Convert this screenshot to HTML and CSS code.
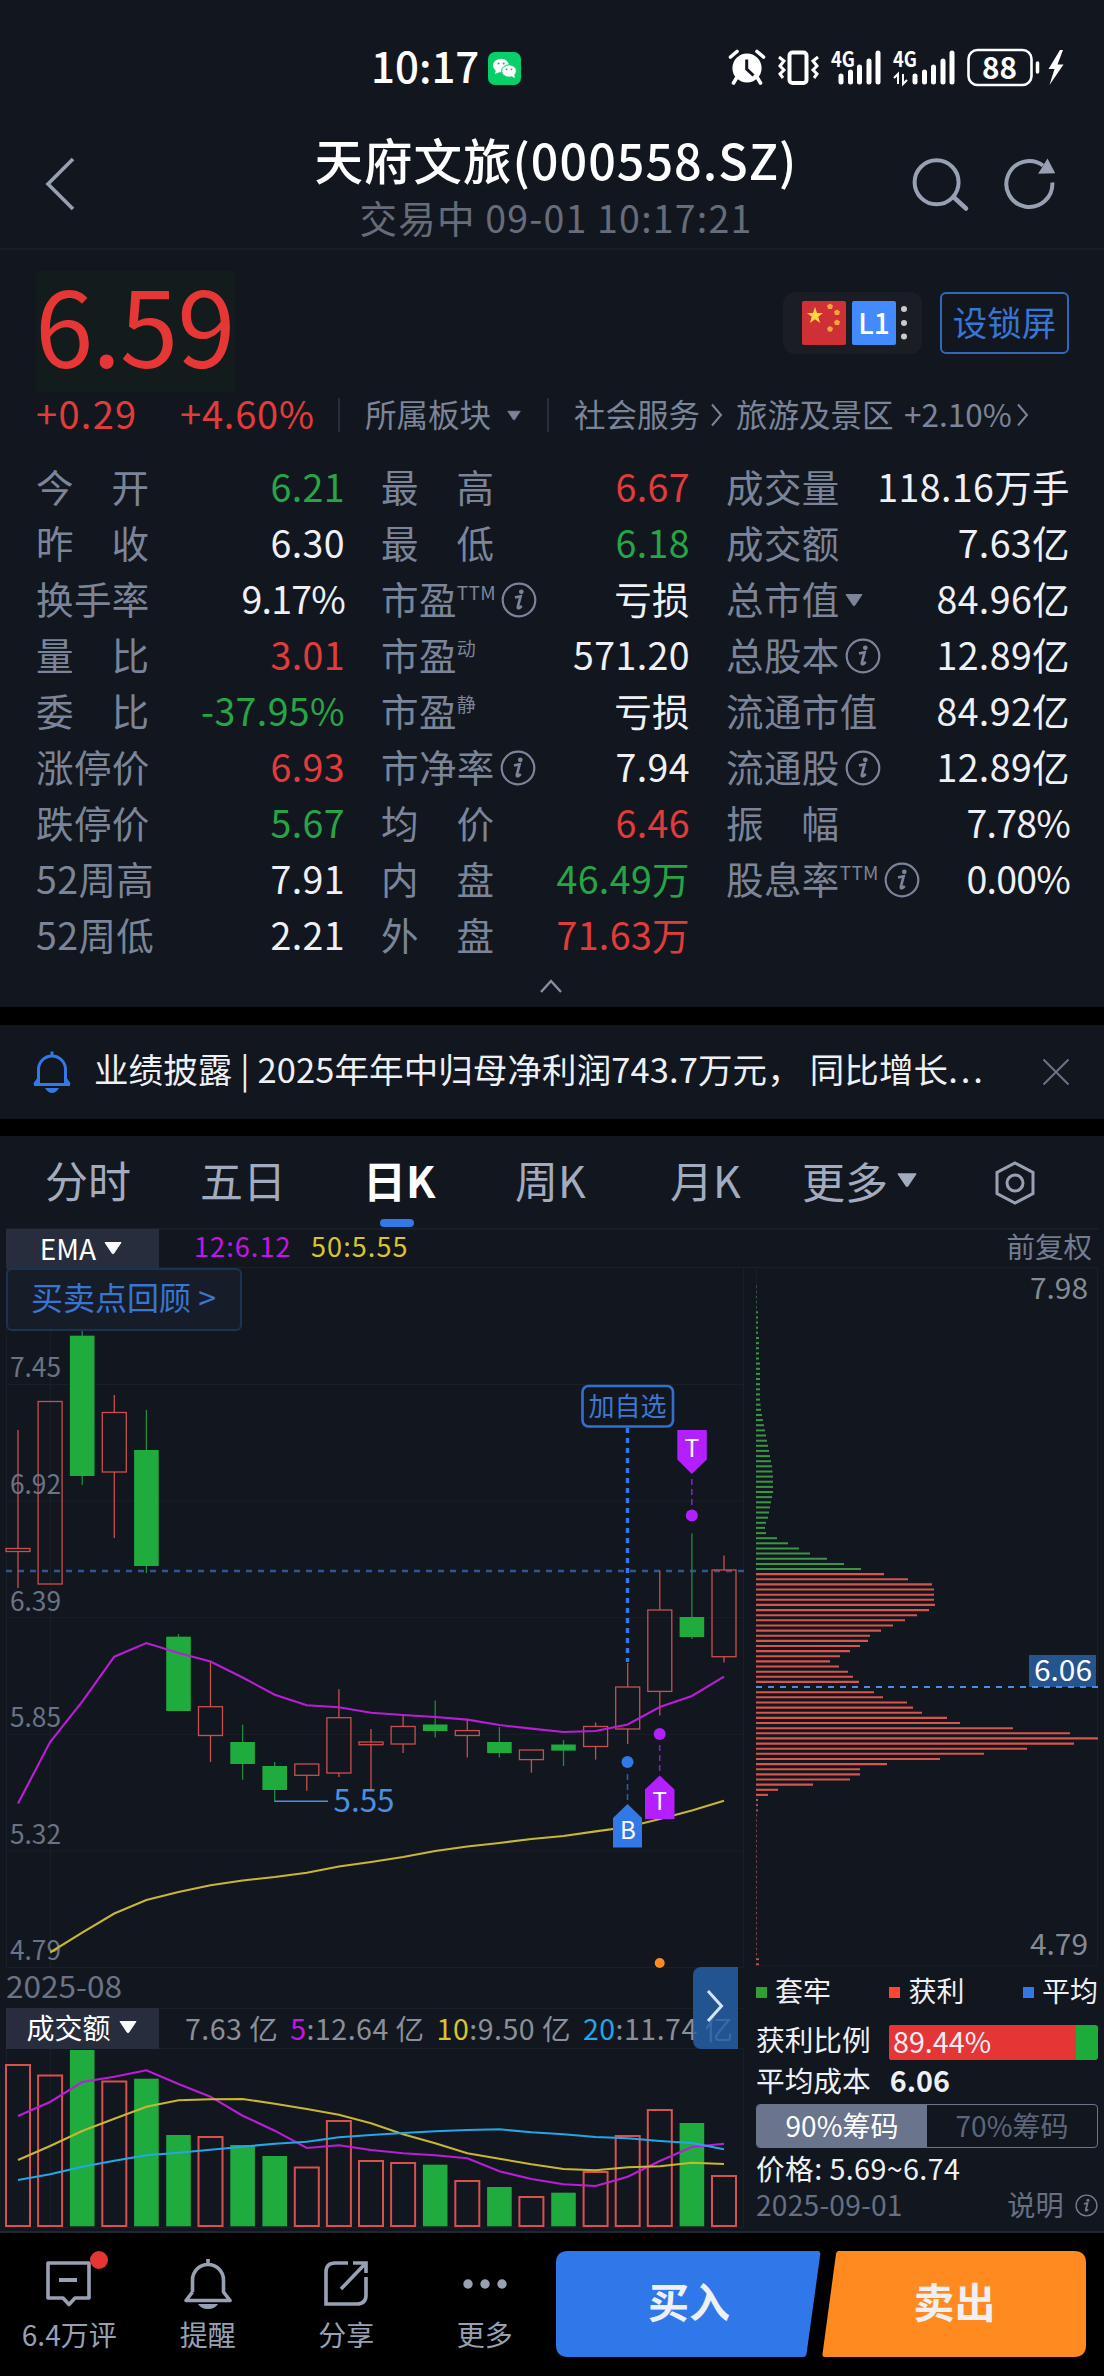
FILE: index.html
```html
<!DOCTYPE html>
<html lang="zh-CN">
<head>
<meta charset="utf-8">
<title>天府文旅(000558.SZ)</title>
<link rel="stylesheet" href="styles.css">
</head>
<body>
<svg width="0" height="0" class="defs">
  <symbol id="info" viewBox="0 0 36 36"><circle cx="18" cy="18" r="16.3" fill="none" stroke="currentColor" stroke-width="2.2"/><circle cx="20.3" cy="9.8" r="2.4" fill="currentColor"/><path d="M14 15.5 Q17.5 14.6 19.6 14.4 L16.8 25 Q16.6 27 18.6 25.8 L20.8 24" fill="none" stroke="currentColor" stroke-width="2.7"/></symbol>
  <symbol id="caret" viewBox="0 0 18 14"><path d="M1 1.5 H17 L9.6 12.6 H8.4 Z" fill="currentColor" stroke="currentColor" stroke-linejoin="round"/></symbol>
  <symbol id="chev" viewBox="0 0 13 24"><path d="M2 1.5 L11 12 L2 22.5" fill="none" stroke="currentColor" stroke-width="2"/></symbol>
</svg>

<header class="status">
  <span class="clock">10:17</span>
  <svg class="wechat" width="33" height="33" viewBox="0 0 33 33"><rect width="33" height="33" rx="7" fill="#07cf69"/><ellipse cx="13" cy="13.5" rx="8" ry="6.8" fill="#fff"/><path d="M8 18l-1 4 5-2z" fill="#fff"/><ellipse cx="21" cy="19" rx="7.4" ry="6.2" fill="#fff" stroke="#07cf69"/><path d="M23 24l4 2-1-4z" fill="#fff"/><g fill="#07b65c"><circle cx="10.5" cy="11.5" r="1"/><circle cx="15.7" cy="11.5" r="1"/><circle cx="18.6" cy="17.3" r=".9"/><circle cx="23.4" cy="17.3" r=".9"/></g></svg>
  <svg class="sysicons" width="340" height="40" viewBox="726 48 340 40" fill="#fff" stroke="#fff">
    <circle cx="746" cy="68" r="14.6" stroke="none"/>
    <path d="M729.5 57 L736 51.5 M762.5 57 L756 51.5 M735.5 78 L732.5 83 M756.500 78 L759.500 83" stroke-width="3.6" stroke-linecap="round"/>
    <path d="M745.700 59.500 V69 L752.500 75.500" fill="none" stroke="#12171f" stroke-width="3"/>
    <rect x="788.500" y="52.500" width="17" height="30.500" rx="3" fill="none" stroke-width="4"/>
    <path d="M778 57 L783 61 L779 66 L783 70 L779 74 L782 78 M817 57 L812 61 L816 66 L812 70 L816 74 L813 78" fill="none" stroke-width="3"/>
    <path d="M840 76 V82 M849.500 72 V82 M858.500 67 V82 M868 61 V82 M877 53 V82 M914 76 V82 M923.500 72 V82 M932.500 67 V82 M942 61 V82 M951 53 V82" stroke-width="5" stroke-linecap="round"/>
    <path d="M893 78 L897 74 V84 M902 74 V84 L906 80" fill="none" stroke-width="2"/>
    <rect x="967.500" y="50" width="63" height="35" rx="9" fill="none" stroke-width="2.600"/>
    <path d="M1036.500 63 V72" stroke-width="3.500" stroke-linecap="round"/>
    <path d="M1059 50 L1047.500 69 H1053.500 L1048.500 85 L1062.500 64.500 H1056.500 L1062 50 Z" stroke="none"/>
    <g stroke="none" class="sys-text"><text x="830" y="67" font-size="21" textLength="24" lengthAdjust="spacingAndGlyphs">4G</text><text x="892" y="67" font-size="21" textLength="24" lengthAdjust="spacingAndGlyphs">4G</text><text x="981" y="78.500" font-size="30" textLength="35" lengthAdjust="spacingAndGlyphs">88</text></g>
  </svg>
</header>

<nav class="titlebar">
  <svg width="34" height="56" viewBox="0 0 34 56"><path d="M30 3 L5 28 L30 53" fill="none" stroke="#98a1b3" stroke-width="3.600"/></svg>
  <div class="titles"><h1>天府文旅(000558.SZ)</h1><p>交易中 09-01 10:17:21</p></div>
  <svg width="146" height="58" viewBox="908 156 146 58" fill="none" stroke="#98a1b3" stroke-width="4">
    <circle cx="935.600" cy="183.300" r="22"/><path d="M952.500 198 L965 209.500" stroke-width="4.500" stroke-linecap="round"/>
    <path d="M1051.300 183.500 A23 23 0 1 1 1042 166.500"/><path d="M1046.500 161 L1053 173.500 L1038.500 174 Z" fill="#98a1b3" stroke-width="1.500"/>
  </svg>
</nav>

<section class="quote">
  <div class="price-row">
    <div class="price">6.59</div>
    <div class="badges">
      <svg width="44" height="44" viewBox="0 0 44 44"><rect width="44" height="44" rx="2" fill="#cf3036"/><path d="M13 6 L15 12 21 12 16.300 15.800 18 22 13 18.300 8 22 9.700 15.800 5 12 11 12Z" fill="#ffd83d"/><g fill="#f0a53c"><path d="M28 2.500l3 2-1 3.500h-4l-1-3.500zM35 8.500l3 2-1 3.500h-4l-1-3.500zM35 18.500l3 2-1 3.500h-4l-1-3.500zM28 25l3 2-1 3.500h-4l-1-3.500z"/></g></svg>
      <b>L1</b>
      <svg width="6" height="36" viewBox="0 0 6 36" fill="#c9cbd0"><circle cx="3" cy="4" r="3"/><circle cx="3" cy="18" r="3"/><circle cx="3" cy="31.500" r="3"/></svg>
    </div>
    <button class="lock">设锁屏</button>
  </div>
  <div class="change-row">
    <span class="red chg">+0.29</span><span class="red pct">+4.60%</span><i></i>
    <span class="sector">所属板块</span><svg class="sm-caret" width="14" height="11" viewBox="0 0 18 14"><use href="#caret" width="18" height="14"/></svg><i></i>
    <span class="s1">社会服务</span><svg width="13" height="24"><use href="#chev"/></svg><span class="s2">旅游及景区</span><span class="s3">+2.10%</span><svg width="13" height="24"><use href="#chev"/></svg>
  </div>
  <div class="stats">
    <dl>
      <div><dt class="two">今<span>开</span></dt><dd class="green">6.21</dd></div>
      <div><dt class="two">昨<span>收</span></dt><dd>6.30</dd></div>
      <div><dt>换手率</dt><dd class="tight">9.17%</dd></div>
      <div><dt class="two">量<span>比</span></dt><dd class="red">3.01</dd></div>
      <div><dt class="two">委<span>比</span></dt><dd class="green">-37.95%</dd></div>
      <div><dt>涨停价</dt><dd class="red">6.93</dd></div>
      <div><dt>跌停价</dt><dd class="green">5.67</dd></div>
      <div><dt>52周高</dt><dd>7.91</dd></div>
      <div><dt>52周低</dt><dd>2.21</dd></div>
    </dl>
    <dl>
      <div><dt class="two">最<span>高</span></dt><dd class="red">6.67</dd></div>
      <div><dt class="two">最<span>低</span></dt><dd class="green">6.18</dd></div>
      <div><dt>市盈<sup>TTM</sup><svg width="36" height="36"><use href="#info"/></svg></dt><dd>亏损</dd></div>
      <div><dt>市盈<sup>动</sup></dt><dd>571.20</dd></div>
      <div><dt>市盈<sup>静</sup></dt><dd>亏损</dd></div>
      <div><dt>市净率<svg width="36" height="36"><use href="#info"/></svg></dt><dd>7.94</dd></div>
      <div><dt class="two">均<span>价</span></dt><dd class="red">6.46</dd></div>
      <div><dt class="two">内<span>盘</span></dt><dd class="green">46.49万</dd></div>
      <div><dt class="two">外<span>盘</span></dt><dd class="red">71.63万</dd></div>
    </dl>
    <dl>
      <div><dt>成交量</dt><dd>118.16万手</dd></div>
      <div><dt>成交额</dt><dd>7.63亿</dd></div>
      <div><dt>总市值<svg class="cap-caret" width="18" height="14"><use href="#caret"/></svg></dt><dd>84.96亿</dd></div>
      <div><dt>总股本<svg width="36" height="36"><use href="#info"/></svg></dt><dd>12.89亿</dd></div>
      <div><dt>流通市值</dt><dd>84.92亿</dd></div>
      <div><dt>流通股<svg width="36" height="36"><use href="#info"/></svg></dt><dd>12.89亿</dd></div>
      <div><dt class="two">振<span>幅</span></dt><dd class="tight">7.78%</dd></div>
      <div><dt>股息率<sup>TTM</sup><svg width="36" height="36"><use href="#info"/></svg></dt><dd class="tight">0.00%</dd></div>
    </dl>
  </div>
  <svg class="collapse" width="24" height="16" viewBox="0 0 24 16"><path d="M2 14 L12 3 L22 14" fill="none" stroke="#8790a3" stroke-width="2.400"/></svg>
</section>

<section class="news">
  <svg width="40" height="44" viewBox="0 0 40 44"><path d="M20 1.500V6M6.500 33V19.500a13.500 13.500 0 0 1 27 0V33M2 34.500H38M6.500 29L2.500 34.500M33.500 29L37.500 34.500" fill="none" stroke="#3278e6" stroke-width="3"/><path d="M13 38H27Q24 43 20 43T13 38Z" fill="#3278e6"/></svg>
  <p>业绩披露 | 2025年年中归母净利润743.7万元<span class="comma">，</span>同比增长<span class="dots">...</span></p>
  <svg width="28" height="28" viewBox="0 0 28 28"><path d="M1.500 1.500L26.500 26.500M26.500 1.500L1.500 26.500" stroke="#6a7388" stroke-width="2"/></svg>
</section>

<section class="chart">
  <nav class="tabs">
    <span>分时</span><span>五日</span><span class="on">日K</span><span>周K</span><span>月K</span><span>更多<svg width="20" height="16" viewBox="0 0 18 14"><use href="#caret" width="18" height="14"/></svg></span>
    <svg class="gear" width="42" height="44" viewBox="0 0 42 44" fill="none" stroke="#98a1b3" stroke-width="3"><path d="M21 2L39 11.500V32.500L21 42L3 32.500V11.500Z"/><circle cx="21" cy="22" r="8"/></svg>
  </nav>
  <div class="indicator">
    <div class="tag">EMA<svg width="18" height="14"><use href="#caret"/></svg></div>
    <span class="ema12">12:6.12</span><span class="ema50">50:5.55</span><span class="adj">前复权</span>
  </div>
  <div class="panes">
    <div class="left">
      <button class="review">买卖点回顾 &gt;</button>
      <svg id="kline" width="744" height="740" viewBox="0 1268 744 740"></svg>
      <div class="vol-head">
        <div class="tag">成交额<svg width="18" height="14"><use href="#caret"/></svg></div>
        <span>7.63 亿</span><span><b class="m">5</b>:12.64 亿</span><span><b class="y">10</b>:9.50 亿</span><span><b class="c">20</b>:11.74 亿</span>
      </div>
      <svg id="volume" width="744" height="183" viewBox="0 2049 744 183"></svg>
      <div class="drawer"><svg width="18" height="34" viewBox="0 0 18 34"><path d="M2 2L15.500 17L2 32" fill="none" stroke="#d5e4f7" stroke-width="3"/></svg></div>
    </div>
    <div class="right">
      <svg id="chips" width="360" height="700" viewBox="744 1268 360 700"></svg>
      <div class="legend"><span class="lg">套牢</span><span class="lr">获利</span><span class="lb">平均</span></div>
      <div class="ratio"><span>获利比例</span><div class="bar"><div style="width:89.44%">89.44%</div></div></div>
      <div class="cost"><span>平均成本</span><b>6.06</b></div>
      <div class="seg"><span class="on">90%筹码</span><span>70%筹码</span></div>
      <div class="range">价格: 5.69~6.74</div>
      <div class="date"><span>2025-09-01</span><span>说明<svg width="23" height="23" viewBox="0 0 36 36"><use href="#info" width="36" height="36"/></svg></span></div>
    </div>
  </div>
</section>

<footer>
  <div class="act"><span class="icon"><svg width="48" height="50" viewBox="0 0 48 50" fill="none" stroke="#98a1b3" stroke-width="3.600" stroke-linejoin="round"><path d="M3 5H44V40H30L24 46.500L18 40H3Z"/><path d="M14 22H32" stroke-width="4"/></svg><i class="dot"></i></span>6.4万评</div>
  <div class="act"><span class="icon"><svg width="50" height="52" viewBox="0 0 50 52" fill="none" stroke="#98a1b3" stroke-width="3.600"><path d="M25 1V7M9.500 34V22a15.500 15.500 0 0 1 31 0V34L47 42.500H3L9.500 34" stroke-linejoin="round"/><path d="M15 46H35Q32 51 25 51T15 46Z" fill="#98a1b3" stroke="none"/></svg></span>提醒</div>
  <div class="act"><span class="icon"><svg width="46" height="50" viewBox="0 0 46 50" fill="none" stroke="#98a1b3" stroke-width="3.600"><path d="M25 5H12Q3 5 3 14V46H34Q43 46 43 37V19M18 31L41 7M30 5H43V15"/></svg></span>分享</div>
  <div class="act"><span class="icon"><svg width="46" height="50" viewBox="0 0 46 50" fill="#98a1b3"><circle cx="6" cy="26" r="4.700"/><circle cx="23" cy="26" r="4.700"/><circle cx="40" cy="26" r="4.700"/></svg></span>更多</div>
  <div class="trade buy"><svg width="266" height="106" viewBox="0 0 266 106"><path d="M12 0H262Q264.500 0 264.300 3L250.500 103Q250 106 247 106H12Q0 106 0 94V12Q0 0 12 0Z" fill="#3078ea"/></svg><span>买入</span></div>
  <div class="trade sell"><svg width="265" height="106" viewBox="0 0 265 106"><path d="M17 0H252Q264 0 264 12V94Q264 106 252 106H3Q0 106 .5 103L14 3Q14.500 0 17 0Z" fill="#ff8b20"/></svg><span>卖出</span></div>
</footer>
<script src="chart.js"></script>
</body>
</html>
```
FILE: styles.css
```css
* { box-sizing: border-box; margin: 0; padding: 0; }
body { width: 1104px; height: 2376px; background: #000; color: #eef0f5; font-family: "Noto Sans CJK SC", "Noto Sans", sans-serif; overflow: hidden; }
svg { display: block; flex: none; }
.defs { position: absolute; }
button { font: inherit; background: none; border: 0; white-space: nowrap; }
.red { color: #e13c3c; }
.green { color: #27a546; }

.status { height: 115px; background: #12171f; display: flex; align-items: center; padding-top: 21px; }
.clock { margin-left: 371px; width: 117px; font-size: 42px; line-height: 50px; font-weight: 500; color: #fff; margin-top: -7px; }
.sysicons { margin-left: 206px; overflow: visible; }
.sys-text { font-family: "Noto Sans CJK SC", sans-serif; font-weight: 700; }

.titlebar { height: 135px; background: #12171f; border-bottom: 2px solid #191e27; display: flex; align-items: center; padding: 4px 49px 0 43px; }
.titles { width: 600px; text-align: center; white-space: nowrap; margin: 4px 0 0 179px; }
.titles h1 { font-size: 48.500px; line-height: 60px; font-weight: 500; color: #fff; letter-spacing: 1px; }
.titles p { font-size: 37.500px; line-height: 50px; color: #666c79; letter-spacing: 1.200px; margin-top: 3px; }
.titlebar > svg:last-child { margin-left: auto; }

.quote { height: 757px; background: #12171f; padding: 21px 35px 0 36px; }
.price-row { display: flex; align-items: center; height: 121px; }
.price { width: 199px; height: 121px; background: #121c1c; color: #e73636; font-size: 105px; line-height: 102px; font-weight: 400; letter-spacing: -1.200px; margin-right: auto; text-indent: -1px; }
.badges { width: 139px; height: 62px; border-radius: 12px; background: #1a1d24; display: flex; align-items: center; padding-left: 19px; margin-right: 18px; margin-top: -17px; }
.badges b { width: 44px; height: 44px; margin: 0 5px 0 6px; border-radius: 2px; background: #448aff; color: #fff; font: 500 28px/43px "Noto Sans CJK SC"; text-align: center; }
.lock { width: 129px; height: 62px; margin-top: -17px; border: 2px solid #3268ba; border-radius: 6px; color: #3975d2; font-size: 34.500px; line-height: 50px; padding-bottom: 4px; }
.change-row { display: flex; align-items: center; height: 46px; line-height: 40px; color: #7b8499; font-size: 31.500px; white-space: nowrap; }
.change-row span { position: relative; top: -2px; }
.change-row i { width: 2px; height: 34px; background: #272d39; }
.change-row .chg { width: 144px; font-size: 38px; letter-spacing: 1.300px; }
.change-row .pct { width: 158px; font-size: 38px; letter-spacing: .8px; }
.sector { margin-left: 25px; width: 142px; }
.sm-caret { margin-right: 26px; }
.s1 { margin-left: 25px; width: 136px; }
.s2 { margin-left: 13px; width: 168px; }
.s3 { width: 112px; }

.stats { display: grid; grid-template-columns: 309px 309px 344px; column-gap: 36px; margin-top: 21px; width: 1034px; }
.stats dl > div { display: flex; justify-content: space-between; height: 56px; line-height: 54px; font-size: 37.500px; white-space: nowrap; }
.stats dt { display: flex; color: #7b8499; letter-spacing: .4px; }
.stats dt.two { width: 113px; justify-content: space-between; letter-spacing: 0; }
.stats dt svg { margin: 11px 0 0 5px; }
.stats dt .cap-caret { margin: 22px 0 0 5px; }
.stats sup { font-size: 19px; line-height: 41px; letter-spacing: .3px; }
.stats dd { letter-spacing: .4px; }
.stats dd.tight { letter-spacing: -.8px; }
.collapse { margin: 15px 0 0 503px; }

.news { height: 94px; margin-top: 18px; background: #12171f; display: flex; align-items: center; padding-left: 32px; }
.news p { width: 927px; margin: -8px 0 0 22px; font-size: 34.500px; line-height: 50px; white-space: nowrap; letter-spacing: .1px; }
.comma { margin-right: 8px; }
.dots { letter-spacing: 3px; }
.news svg:last-child { margin-left: 21px; }

.chart { height: 1097px; margin-top: 17px; background: #12171f; border-bottom: 2px solid #22262e; }
.tabs { display: flex; height: 92px; padding-left: 45px; font-size: 43px; line-height: 86px; color: #a3abbf; white-space: nowrap; }
.tabs span:nth-child(1) { width: 155px; }
.tabs span:nth-child(2) { width: 163px; }
.tabs span:nth-child(3) { width: 152px; }
.tabs span:nth-child(4) { width: 155px; }
.tabs span:nth-child(5) { width: 132px; }
.tabs span:nth-child(6) { width: 192px; display: flex; align-items: center; gap: 9px; height: 87px; }
.tabs .on { color: #fff; font-weight: 700; }
.tabs .on::after { content: ""; display: block; width: 34px; height: 8px; margin: -3px 0 0 17px; border-radius: 4px; background: #3278e6; }
.gear { margin-top: 25px; }
.indicator { display: flex; height: 40px; margin: 0 6px; border-top: 2px solid #191e27; border-bottom: 1px solid #191e27; line-height: 32px; font-size: 27px; }
.tag { flex: none; width: 153px; height: 41px; margin-top: -1px; background: #272d3d; color: #fff; display: flex; justify-content: center; align-items: center; gap: 8px; font-size: 28px; line-height: 36px; padding-bottom: 4px; }
.indicator .tag { padding-right: 3px; }
.ema12 { margin-left: 35px; width: 117px; color: #c414e6; letter-spacing: 1.100px; }
.ema50 { color: #d8c52e; letter-spacing: 1.100px; }
.adj { margin-left: auto; padding-right: 6px; font-size: 28.500px; color: #747d92; }
.panes { display: flex; }
.left { width: 744px; position: relative; }
.review { position: absolute; left: 6px; top: 0; width: 236px; height: 63px; border: 2px solid #1c3252; border-radius: 6px; background: #161d28; color: #3975d2; font-size: 32px; line-height: 50px; text-align: left; padding: 0 0 8px 23px; z-index: 1; }
.vol-head { display: flex; height: 41px; border-top: 1px solid #191e27; border-bottom: 1px solid #191e27; margin-left: 6px; font-size: 28.500px; line-height: 38px; color: #8a8f99; white-space: nowrap; letter-spacing: .5px; }
.vol-head .tag { margin-right: 26px; letter-spacing: 0; padding-right: 2px; }
.vol-head > span { margin-right: 12px; }
.vol-head b { font-weight: 400; }
.m { color: #c414e6; }
.y { color: #d8c52e; }
.c { color: #22a7e8; }
.drawer { position: absolute; left: 693px; top: 699px; width: 45px; height: 82px; border-radius: 8px 0 0 8px; background: rgba(38, 98, 172, .82); padding: 22px 0 0 13px; }
.right { width: 360px; font-size: 28.700px; white-space: nowrap; }
.right > div { margin-left: 12px; width: 342px; }
.right svg text, #kline text { font-family: "Noto Sans CJK SC", sans-serif; }
.legend { display: flex; justify-content: space-between; height: 46px; line-height: 42px; font-size: 28px; }
.legend span { display: flex; align-items: center; gap: 8px; height: 43px; }
.legend span::before { content: ""; width: 11px; height: 11px; margin-top: 5px; background: currentColor; }
.legend .lg::before { background: #2ea12f; }
.legend .lr::before { background: #ff4633; }
.legend .lb::before { background: #3278e6; }
.ratio { display: flex; justify-content: space-between; height: 48px; line-height: 50px; }
.bar { width: 209px; height: 35px; margin-top: 11px; border-radius: 3px; background: #1dab3c; line-height: 31px; }
.bar div { height: 35px; background: #e53535; border-radius: 3px 0 0 3px; padding-left: 4px; }
.cost { display: flex; height: 42px; line-height: 35px; }
.cost b { margin-left: 19px; }
.seg { display: flex; height: 44px; border: 1px solid #6a748c; border-radius: 4px; text-align: center; line-height: 40px; color: #5d667b; font-size: 28px; overflow: hidden; }
.seg span { flex: 1; }
.seg .on { background: #6a748c; color: #fff; }
.range { height: 40px; line-height: 39px; letter-spacing: .4px; }
.date { display: flex; justify-content: space-between; line-height: 32px; color: #666f84; font-size: 28.200px; }
.date span { display: flex; letter-spacing: .2px; }
.date svg { margin: 6px 0 0 11px; color: #747a87; }

footer { display: flex; height: 143px; }
.act { width: 138.500px; padding-top: 21px; text-align: center; color: #98a1b3; font-size: 28px; line-height: 33px; white-space: nowrap; }
.act .icon { display: block; position: relative; height: 64px; }
.act .icon svg { margin: 0 auto; position: relative; top: 4px; }
.dot { position: absolute; left: 90px; top: -3px; width: 18px; height: 18px; border-radius: 50%; background: #e53535; }
.trade { display: grid; margin-top: 18px; height: 106px; place-items: center; font-size: 41px; font-weight: 700; line-height: 96px; }
.trade > * { grid-area: 1 / 1; }
.trade span { margin: -9px 0 0 0; height: 96px; }
.buy { margin-left: 2px; width: 266px; }
.sell { width: 265px; }
```
FILE: chart.js
```js
const RED = '#c94f4f', GREEN = '#1fab3e';
const step = 32.09, first = 18;
const cx = i => +(first + i * step).toFixed(1);
const line = (x1, y1, x2, y2, color, w = 1, extra = '') =>
  `<path d="M${x1} ${y1}L${x2} ${y2}" stroke="${color}" stroke-width="${w}" fill="none" ${extra}/>`;
const curve = (ys, color, from = 0, w = 2.1) =>
  `<polyline points="${ys.map((y, i) => cx(i + from) + ',' + y).join(' ')}" fill="none" stroke="${color}" stroke-width="${w}"/>`;
const label = (x, y, s, size, color, width) =>
  `<text x="${x}" y="${y}" font-size="${size}" fill="${color}" ${width ? `textLength="${width}" lengthAdjust="spacingAndGlyphs"` : ''}>${s}</text>`;

// Daily candles: direction, body top, body bottom, wick top, wick bottom.
const candles = [
  ['r',1548.5,1551.5,1430,1588],['r',1401.5,1584,1401.5,1584],['g',1335.7,1476,1330,1485],['r',1412.5,1472,1395,1538],
  ['g',1450,1566,1410,1573],['g',1636.7,1711,1634,1711],['r',1706.7,1735.5,1662,1762],['g',1742,1764,1724.7,1779.7],
  ['g',1766,1790,1762,1801.7],['r',1764,1775.3,1764,1790.7],['r',1717.7,1773,1689.3,1777],['r',1742,1744.7,1729,1790],
  ['r',1726.5,1744,1714,1753],['g',1724.5,1731,1700.4,1737.5],['r',1730.6,1735.5,1719,1757.5],['g',1742,1753,1727,1757.5],
  ['r',1750,1759.6,1750,1772.6],['g',1744.5,1750.6,1740,1766],['r',1726.5,1746.5,1722.4,1759.6],['r',1687,1729,1663,1744],
  ['r',1610,1691.4,1570.6,1715.5],['g',1617,1637,1533.5,1639],['r',1570,1656.7,1555.5,1662.5]
];
let k = '';
[1384.5,1501,1617.6,1734.3,1851,1967.5].forEach(y => k += line(6, y, 744, y, '#191e27'));
k += line(6.5,1268,6.500,1967,'#191e27') + line(50.5,1268,50.5,1967,'#191e27') + line(743.5,1268,743.5,1967,'#191e27');
k += line(6,1571,744,1571,'#2c5795',2.6,'stroke-dasharray="6 6"');
candles.forEach(([d,t,b,h,l], i) => {
  const x = cx(i);
  if (d === 'g') {
    k += line(x,h,x,l,'#258b3c',1.3) + `<rect x="${x-12.3}" y="${t}" width="24.6" height="${b-t}" fill="${GREEN}"/>`;
  } else {
    k += line(x,h,x,t,RED,1.3) + line(x,b,x,l,RED,1.3) + `<rect x="${x-12}" y="${t}" width="24" height="${b-t}" fill="none" stroke="${RED}" stroke-width="1.3"/>`;
  }
});
[['7.45',1377.3],['6.92',1494],['6.39',1611],['5.85',1727.3],['5.32',1844],['4.79',1960]].forEach(([s,y]) => k += label(10,y,s,26.5,'#6b7388',51));
k += label(6,1997.500,'2025-08',29.5,'#6b7388',116);
k += curve([1803.5,1742,1701.7,1656.7,1643,1653,1661.5,1677.5,1694.7,1705.3,1707.3,1712.7,1715,1717,1719.6,1725,1728.6,1732,1731,1724.5,1707,1696,1676.7],'#b91ed6');
k += curve([1952.5,1932.7,1913.5,1900,1892,1885.3,1880.5,1877,1872.7,1866.5,1862,1857,1851,1846.5,1843,1839,1836,1831.4,1827,1819,1810.6,1800.8],'#c9b632',1);
k += line(274.5,1801.3,328,1801.3,'#4a90e2',1.4) + label(333.500,1811.7,'5.55',31.5,'#4a90e2',61);
k += line(627.5,1428,627.5,1662,'#3278e6',3.4,'stroke-dasharray="5 5"');
k += '<rect x="582.5" y="1386" width="90.500" height="40.500" rx="6" fill="none" stroke="#3370cc" stroke-width="2.6"/>' + label(588.500,1415.5,'加自选',26,'#3f78d0');
const P = '#b31fff', B = '#3278e6';
k += `<path d="M677.3 1430h29.500v29.500L691.8 1474L677.3 1459.500Z" fill="${P}"/>` + line(691.8,1479,691.8,1506,'#7f24b0',1.6,'stroke-dasharray="6 4"') + `<circle cx="691.800" cy="1515.500" r="6" fill="${P}"/>`;
k += `<circle cx="659.700" cy="1734" r="6" fill="${P}"/>` + line(659.7,1745,659.7,1771,'#7f24b0',1.6,'stroke-dasharray="6 4"') + `<path d="M659.700 1775.500L674.500 1789.500V1819H645V1789.500Z" fill="${P}"/>`;
k += `<circle cx="627.500" cy="1762" r="6" fill="${B}"/>` + line(627.5,1774,627.5,1800,'#285ca9',1.6,'stroke-dasharray="6 4"') + `<path d="M627.500 1804L642 1818V1847.500H613V1818Z" fill="${B}"/>`;
k += `<g text-anchor="middle" class="marks">${label(692,1457,'T',24,'#fff')}${label(659.8,1810,'T',24,'#fff')}${label(627.8,1838.5,'B',24,'#fff')}</g>`;
k += '<circle cx="659.700" cy="1963" r="5" fill="#ff8b20"/>';
document.getElementById('kline').innerHTML = k;

// Turnover bars with their 5, 10 and 20 day averages.
const vols = [2065,2075.5,2050,2081.5,2078.7,2135,2137,2145,2156,2167.5,2121,2161,2163,2164.7,2181,2187,2197,2192.7,2172,2136,2110,2123,2176];
let v = line(6.5,2049,6.500,2228,'#191e27') + line(50.5,2049,50.5,2228,'#191e27') + line(743.5,2049,743.5,2228,'#191e27') + line(6,2227.5,744,2227.5,'#191e27');
vols.forEach((t, i) => {
  const x = cx(i);
  v += candles[i][0] === 'g'
    ? `<rect x="${x-12.3}" y="${t}" width="24.6" height="${2226.3-t}" fill="${GREEN}"/>`
    : `<rect x="${x-12}" y="${t}" width="24" height="${2226-t}" fill="none" stroke="#d9504f" stroke-width="2"/>`;
});
v += curve([2116,2102,2082,2076.7,2070.3,2084,2096.7,2115.7,2130.7,2148,2145.3,2150,2153.3,2155.3,2158.3,2171.3,2179,2184.3,2186,2176.7,2161,2147,2143.7],'#b91ed6');
v += curve([2160,2146,2131,2118.7,2106.7,2100.3,2099.3,2099,2103.7,2109,2114.7,2123.3,2134.3,2143.3,2153.3,2158.7,2164.3,2169,2170.3,2167.3,2166.3,2162.7,2164],'#c9b632');
v += curve([2180,2174.3,2166.7,2160.7,2155.3,2152.7,2149.7,2146.7,2143.7,2141.7,2137.3,2135,2133,2131.3,2130,2129.3,2132.3,2134.3,2137,2138.3,2141,2143,2149.3],'#22a7e8');
document.getElementById('volume').innerHTML = v;

// Cost distribution, from the highest price down; the null row carries the average line.
const above = [1,1,1,1,1,2,2,2,2,2,3,3,3,3,3,4,4,4,4,4,4,4,4,4.5,5,6,7,8,9,10,11,12,13,14,15,16,16.5,17,17,17,17,16,15,14,13,12,10,9,10,21,32,43,54,71,88,105];
const below = [128,152,176,178,178,178,179,173,161,149,137,125,114,112,104,94,84,74,83,92,97,103,null,118,127,151,157,166,191,204,257,314,342,318,271,228,184,131,104,104,94,57,22,12];
let c = '<rect x="756.5" y="1268" width="341" height="698" fill="none" stroke="#191e27"/>';
const row = 5.134;
above.forEach((w, i) => { const y = 1569 - (above.length - 1 - i) * row; c += line(756,y.toFixed(1),756+w,y.toFixed(1),'#3c9445',2,i < 5 ? 'opacity=".6"' : ''); });
below.forEach((w, i) => { if (w) { const y = (1569 + (i + 1) * row).toFixed(1); c += line(756,y,756+w,y,'#d8554b',2.1); } });
for (let i = 0; i < 33; i++) {
  const y = (1569 + (45 + i) * row).toFixed(1), w = i > 30 ? 3 : i < 3 ? 2 : 1;
  c += line(756,y,756+w,y,'#c05a50',1.8,w === 1 ? 'opacity=".7"' : '');
}
c += '<rect x="1029" y="1655" width="67" height="32" fill="#26548f"/>' + line(756,1687,1098,1687,'#4a90e2',1.8,'stroke-dasharray="6 6"');
c += label(1030,1299,'7.98',28,'#858a94',58) + label(1030,1954.5,'4.79',28,'#858a94',58) + label(1034,1681,'6.06',28.5,'#fff',58);
document.getElementById('chips').innerHTML = c;
```
